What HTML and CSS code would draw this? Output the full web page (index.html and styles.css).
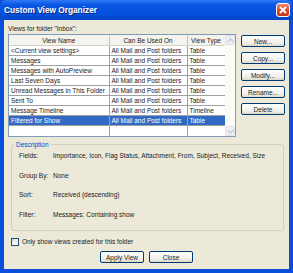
FILE: index.html
```html
<!DOCTYPE html>
<html>
<head>
  <meta charset="UTF-8">
  <title>Custom View Organizer</title>
  <link rel="stylesheet" href="styles.css">
</head>
<body>
  <div class="window">
    <div class="titlebar">
      <span class="title">Custom View Organizer</span>
      <span class="close-btn">
        <svg width="10" height="10" viewBox="0 0 10 10"><path d="M2 2 L8 8 M8 2 L2 8" stroke="#fff" stroke-width="1.8"/></svg>
      </span>
    </div>
    <div class="client">
      <div class="folder-label">Views for folder "Inbox":</div>

      <div class="main-row">
        <div class="list">
          <div class="list-body">
            <table class="views">
              <colgroup>
                <col class="c-name"><col class="c-used"><col class="c-type">
              </colgroup>
              <thead>
                <tr><th>View Name</th><th>Can Be Used On</th><th>View Type</th></tr>
              </thead>
              <tbody>
                <tr><td>&lt;Current view settings&gt;</td><td>All Mail and Post folders</td><td>Table</td></tr>
                <tr><td>Messages</td><td>All Mail and Post folders</td><td>Table</td></tr>
                <tr><td>Messages with AutoPreview</td><td>All Mail and Post folders</td><td>Table</td></tr>
                <tr><td>Last Seven Days</td><td>All Mail and Post folders</td><td>Table</td></tr>
                <tr><td>Unread Messages in This Folder</td><td>All Mail and Post folders</td><td>Table</td></tr>
                <tr><td>Sent To</td><td>All Mail and Post folders</td><td>Table</td></tr>
                <tr><td>Message Timeline</td><td>All Mail and Post folders</td><td>Timeline</td></tr>
                <tr class="selected"><td>Filtered for Show</td><td>All Mail and Post folders</td><td>Table</td></tr>
                <tr class="filler"><td></td><td></td><td></td></tr>
              </tbody>
            </table>
          </div>
          <div class="scrollbar">
            <div class="sb-btn">
              <svg width="7" height="5" viewBox="0 0 7 5"><path d="M0.5 4 L3.5 1 L6.5 4" fill="none" stroke="#c2c8d4" stroke-width="1.3"/></svg>
            </div>
            <div class="sb-track"></div>
            <div class="sb-btn">
              <svg width="7" height="5" viewBox="0 0 7 5"><path d="M0.5 1 L3.5 4 L6.5 1" fill="none" stroke="#c2c8d4" stroke-width="1.3"/></svg>
            </div>
          </div>
        </div>

        <div class="side-buttons">
          <button class="btn">New...</button>
          <button class="btn">Copy...</button>
          <button class="btn">Modify...</button>
          <button class="btn">Rename...</button>
          <button class="btn">Delete</button>
        </div>
      </div>

      <div class="group">
        <span class="group-title">Description</span>
        <div class="desc-row"><span class="desc-key">Fields:</span><span>Importance, Icon, Flag Status, Attachment, From, Subject, Received, Size</span></div>
        <div class="desc-row"><span class="desc-key">Group By:</span><span>None</span></div>
        <div class="desc-row"><span class="desc-key">Sort:</span><span>Received (descending)</span></div>
        <div class="desc-row"><span class="desc-key">Filter:</span><span>Messages: Containing show</span></div>
      </div>

      <label class="check-row"><span class="checkbox"></span>Only show views created for this folder</label>

      <div class="bottom-buttons">
        <button class="btn">Apply View</button>
        <button class="btn">Close</button>
      </div>
    </div>
  </div>
</body>
</html>
```

FILE: styles.css
```css
body {
  margin: 0;
  font-family: "Liberation Sans", Arial, sans-serif;
  font-size: 6.5px;
  color: #1a1a1a;
}

.window {
  width: 293px;
  height: 273px;
  background: #0a4fdc;
  display: flex;
  flex-direction: column;
  box-sizing: border-box;
}

.titlebar {
  height: 20px;
  display: flex;
  align-items: center;
  justify-content: space-between;
  padding: 0 3px 0 4px;
  background: linear-gradient(to bottom, #2e7af5 0%, #0856e4 25%, #0550dc 70%, #0646c6 100%);
  border-radius: 6px 6px 0 0;
}

.title {
  color: #fff;
  font-family: "Liberation Sans", Arial, sans-serif;
  font-weight: bold;
  font-size: 8.3px;
  text-shadow: 1px 1px 0 #0a2a80;
}

.close-btn {
  width: 14px;
  height: 14px;
  border: 1px solid #fff;
  border-radius: 3px;
  background: linear-gradient(to bottom, #e88a6c, #d8421f 60%, #c2391a);
  display: flex;
  align-items: center;
  justify-content: center;
  box-sizing: border-box;
}

.client {
  flex: 1;
  background: #ece9d8;
  margin: 0 4px 4px 4px;
  padding: 4px 0 0 4px;
  display: flex;
  flex-direction: column;
}

.folder-label {
  height: 10px;
  line-height: 10px;
}

.main-row {
  display: flex;
}

.list {
  width: 228px;
  height: 103px;
  border: 1px solid #7f9db9;
  background: #fff;
  display: flex;
  box-sizing: border-box;
}

.list-body {
  flex: 1;
  overflow: hidden;
}

.views {
  border-collapse: collapse;
  table-layout: fixed;
  width: 216px;
  height: 101px;
}

.c-name { width: 100px; }
.c-used { width: 78px; }
.c-type { width: 38px; }

.views th {
  height: 10px;
  padding: 0;
  font-weight: normal;
  text-align: center;
  background: #f4f3ee;
  border-right: 1px solid #c7c5b2;
  border-bottom: 1px solid #d6d2c2;
  white-space: nowrap;
}

.views td {
  height: 9px;
  line-height: 9px;
  padding: 0 0 0 2px;
  border-right: 1px solid #a0a0a0;
  border-bottom: 1px solid #a0a0a0;
  white-space: nowrap;
  overflow: hidden;
}

.views tr.selected td {
  background: #316ac5;
  color: #fff;
}

.views tr.filler td {
  height: auto;
  border-bottom: none;
}

.scrollbar {
  width: 10px;
  display: flex;
  flex-direction: column;
  background: #fbfbf8;
}

.sb-btn {
  height: 10px;
  background: #eef0f5;
  border: 1px solid #dde2ea;
  border-radius: 2px;
  box-sizing: border-box;
  display: flex;
  align-items: center;
  justify-content: center;
}

.sb-track {
  flex: 1;
}

.side-buttons {
  display: flex;
  flex-direction: column;
  gap: 5px;
  margin-left: 5px;
  padding-top: 1px;
}

.btn {
  width: 44px;
  height: 12px;
  padding: 0;
  font-family: "Liberation Sans", Arial, sans-serif;
  font-size: 6.5px;
  color: #1a1a1a;
  border: 1px solid #003c74;
  border-radius: 2px;
  background: linear-gradient(to bottom, #ffffff, #f0efea 70%, #dcd8c8);
}

.group {
  position: relative;
  margin: 7px 5px 0 3px;
  height: 87px;
  border: 1px solid #d0d0bf;
  border-radius: 3px;
  box-sizing: border-box;
  padding: 6px 0 0 7px;
}

.group-title {
  position: absolute;
  top: -5px;
  left: 2px;
  padding: 0 2px;
  background: #ece9d8;
  color: #0046d5;
  line-height: 9px;
}

.desc-row {
  display: flex;
  height: 10px;
  line-height: 10px;
  margin-bottom: 9.5px;
}

.desc-key {
  width: 34px;
}

.check-row {
  display: flex;
  align-items: center;
  gap: 3px;
  margin: 6px 0 0 3px;
  height: 9px;
}

.checkbox {
  width: 8px;
  height: 8px;
  border: 1px solid #1c5180;
  background: linear-gradient(135deg, #dcdcd6, #ffffff);
  box-sizing: border-box;
}

.bottom-buttons {
  display: flex;
  justify-content: center;
  gap: 5px;
  margin-top: 5px;
  padding-right: 4px;
}
```
